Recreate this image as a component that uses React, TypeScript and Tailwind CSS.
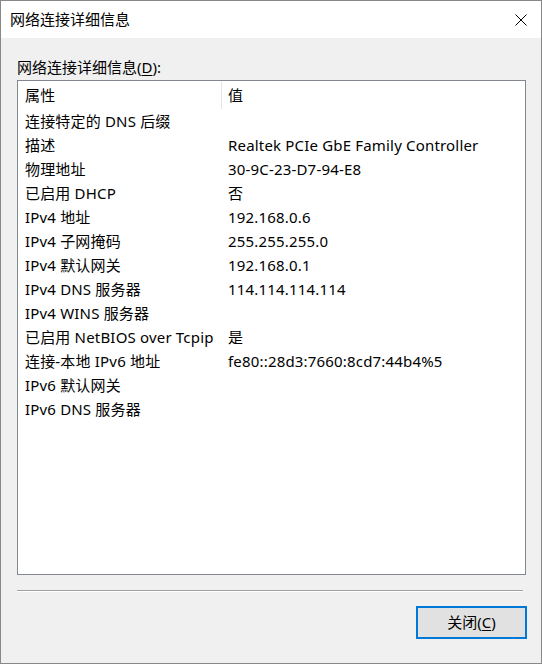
import React from 'react';

const rows: [string, string][] = [
  ['连接特定的 DNS 后缀', ''],
  ['描述', 'Realtek PCIe GbE Family Controller'],
  ['物理地址', '30-9C-23-D7-94-E8'],
  ['已启用 DHCP', '否'],
  ['IPv4 地址', '192.168.0.6'],
  ['IPv4 子网掩码', '255.255.255.0'],
  ['IPv4 默认网关', '192.168.0.1'],
  ['IPv4 DNS 服务器', '114.114.114.114'],
  ['IPv4 WINS 服务器', ''],
  ['已启用 NetBIOS over Tcpip', '是'],
  ['连接-本地 IPv6 地址', 'fe80::28d3:7660:8cd7:44b4%5'],
  ['IPv6 默认网关', ''],
  ['IPv6 DNS 服务器', ''],
];

const font = { fontFamily: '"Noto Sans", "Noto Sans CJK SC", sans-serif' };

export default function App() {
  return (
    <div
      className="w-[542px] h-[664px] border border-[#888888] bg-[#f0f0f0] flex flex-col text-[15px] text-black"
      style={font}
    >
      {/* title bar */}
      <div className="h-[37px] bg-white flex items-center justify-between pl-[9px] pr-[14px]">
        <span className="leading-none">网络连接详细信息</span>
        <svg width="12" height="12" viewBox="0 0 12 12" className="mt-[1px]">
          <path d="M0.5 0.5 L11.5 11.5 M11.5 0.5 L0.5 11.5" stroke="#000" strokeWidth="1" />
        </svg>
      </div>

      <div className="flex-1 flex flex-col px-4 pt-[19px]">
        <div className="leading-[20px] mb-[3px]">
          网络连接详细信息(<span className="underline underline-offset-2">D</span>):
        </div>

        <div className="h-[495px] w-[509px] border border-[#828790] bg-white flex flex-col tracking-[0.18px]">
          <div className="flex h-[28px] items-center pt-[1px]">
            <div className="w-[204px] pl-[7px] h-full flex items-center border-r border-[#e5e5e5]">属性</div>
            <div className="pl-[6px]">值</div>
          </div>
          {rows.map(([k, v]) => (
            <div key={k} className="flex h-[24px] items-center whitespace-nowrap">
              <div className="w-[204px] pl-[7px]">{k}</div>
              <div className="pl-[6px]">{v}</div>
            </div>
          ))}
        </div>

        <div className="mt-[15px] w-[506px] border-t border-[#a0a0a0] border-b border-b-white" />

        <div className="flex justify-end mt-[14px]">
          <button className="w-[111px] h-[33px] bg-[#e1e1e1] border-2 border-[#0078d7] flex items-center justify-center mr-[-2px]">
            关闭(<span className="underline underline-offset-2">C</span>)
          </button>
        </div>
      </div>
    </div>
  );
}
